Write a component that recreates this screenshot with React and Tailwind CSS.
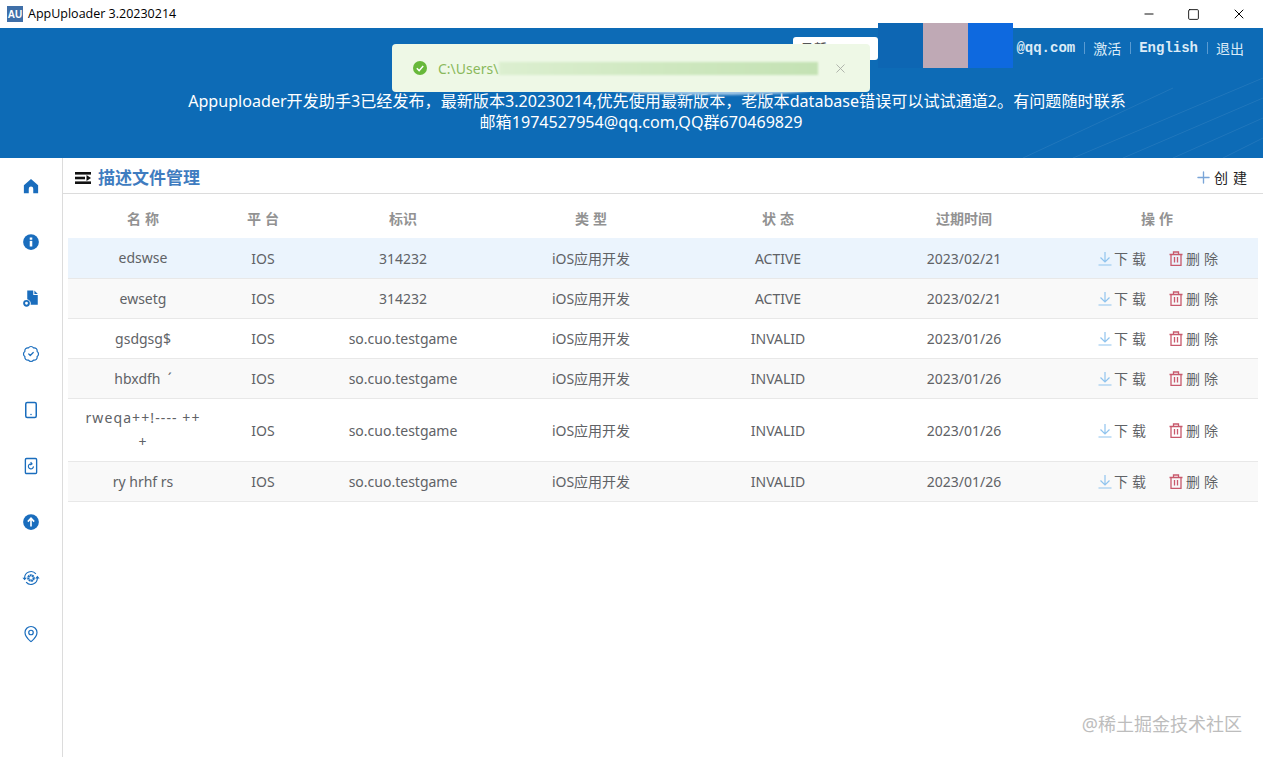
import React from "react";
import { BadgeCheck, Smartphone, MapPin, X, Minus, Square, Plus } from "lucide-react";

const rows = [
  ["edswse", "314232", "ACTIVE", "2023/02/21", "h-10 bg-[#ebf4fd]", ""],
  ["ewsetg", "314232", "ACTIVE", "2023/02/21", "h-10 bg-[#f9f9f9]", ""],
  ["gsdgsg$", "so.cuo.testgame", "INVALID", "2023/01/26", "h-10 bg-white", ""],
  ["hbxdfh  ´", "so.cuo.testgame", "INVALID", "2023/01/26", "h-10 bg-[#f9f9f9]", ""],
  ["rweqa++!---- ++\n+", "so.cuo.testgame", "INVALID", "2023/01/26", "h-[63px] bg-white", "tracking-[1.100px]"],
  ["ry hrhf rs", "so.cuo.testgame", "INVALID", "2023/01/26", "h-10 bg-[#f9f9f9]", ""],
];

const I = ({ children }) => (
  <svg width="18" height="18" viewBox="0 0 24 24" fill="#1a6dbd">{children}</svg>
);

const navIcons = [
  <I key="home"><path d="M12 2.500 2.500 11v10.500h6.500v-6a3 3 0 0 1 6 0v6h6.500V11z" /></I>,
  <I key="info"><circle cx="12" cy="12" r="10.500" /><rect x="10.300" y="10.500" width="3.400" height="7.500" fill="#fff" /><rect x="10.300" y="6" width="3.400" height="3" fill="#fff" /></I>,
  <I key="file">
    <path d="M7 2h8v6h6v13H11.500A6 6 0 0 0 7 13.500z" />
    <path d="M16.500 2 21 6.500h-4.500z" />
    <circle cx="6" cy="19" r="3.200" fill="none" stroke="#1a6dbd" strokeWidth="2.600" />
  </I>,
  <BadgeCheck key="badge" size={18} color="#1a6dbd" strokeWidth={1.6} />,
  <Smartphone key="phone" size={18} color="#1a6dbd" strokeWidth={2} />,
  <svg key="tablet" width="18" height="18" viewBox="0 0 24 24" fill="none" stroke="#1a6dbd" strokeWidth="1.800">
    <rect x="4.500" y="2" width="15" height="20" rx="1.500" />
    <path d="M15.300 12.500a3.400 3.400 0 1 1-2.400-3.300M11.500 6.800l1.900 2.300-2.300 1.700" strokeWidth="1.500" />
  </svg>,
  <I key="up"><circle cx="12" cy="12" r="10.500" /><path d="M12 18V7.500M7.800 11.500 12 7l4.200 4.500" fill="none" stroke="#fff" strokeWidth="2.200" /></I>,
  <svg key="sync" width="20" height="20" viewBox="0 0 24 24" fill="none" stroke="#1a6dbd" strokeWidth="1.500">
    <circle cx="12" cy="12" r="3.600" strokeWidth="3" strokeDasharray="2.400 0.600" />
    <path d="M3.500 12a8.500 8.500 0 0 1 15-5.500M20.500 12a8.500 8.500 0 0 1-15 5.500" />
    <path d="M0.500 11.500h6L3.500 15zM17.500 12.500h6L20.500 9z" fill="#1a6dbd" stroke="none" />
  </svg>,
  <MapPin key="pin" size={18} color="#1a6dbd" strokeWidth={1.6} />,
];

const Sep = () => <span className="mx-[8.500px] h-3 w-px bg-[#5a9bd2]" />;

export default function App() {
  return (
    <div className="relative flex h-[757px] w-[1263px] flex-col overflow-hidden bg-white font-['Noto_Sans','Noto_Sans_CJK_SC',sans-serif] text-[#606266]">
      <div className="flex h-7 shrink-0 items-center bg-white pl-[7px]">
        <div className="flex h-4 w-4 items-center justify-center bg-[#3f6fa8] font-['Liberation_Sans',sans-serif] text-[10px] font-bold text-white">AU</div>
        <span className="ml-[5px] font-['Open_Sans',sans-serif] text-[12.500px] text-black">AppUploader 3.20230214</span>
        <div className="ml-auto flex items-center text-black">
          <span className="flex w-[45px] justify-center"><Minus size={14} strokeWidth={1.6} /></span>
          <span className="flex w-[45px] justify-center"><Square size={13} strokeWidth={1.6} /></span>
          <span className="flex w-[47px] justify-center pr-[1px]"><X size={16} strokeWidth={1.5} /></span>
        </div>
      </div>

      <header className="relative h-[130px] shrink-0 overflow-hidden bg-[#0d6bb6] text-white">
        <svg className="absolute bottom-0 right-0" width="260" height="90" viewBox="0 0 260 90" fill="none" stroke="#ffffff" strokeOpacity="0.08">
          <path d="M20 90 170 20M70 90 260 10M120 90 260 30M170 90 260 50M220 90 260 70" />
        </svg>
        <div className="relative flex h-[38px] items-center justify-end pr-[19px] pt-[2px] text-[14px]">
          <span className="font-['Liberation_Mono',monospace] font-bold text-[#dcebf7]">@qq.com</span>
          <Sep />
          <span className="text-[14px] text-[#dcebf7]">激活</span>
          <Sep />
          <span className="font-['Liberation_Mono',monospace] font-bold text-[#dcebf7]">English</span>
          <Sep />
          <span className="text-[14px] text-[#dcebf7]">退出</span>
        </div>
        <p className="relative ml-[141px] mt-[25px] w-[1000px] text-center text-[16.100px] leading-[21px]">
          <span className="inline-block pl-[32px]">Appuploader开发助手3已经发布，最新版本3.20230214,优先使用最新版本，老版本database错误可以试试通道2。有问题随时联系</span>
          <br />
          邮箱1974527954@qq.com,QQ群670469829
        </p>
      </header>

      <div className="flex min-h-0 flex-1">
        <nav className="flex w-[63px] shrink-0 flex-col items-center gap-[38px] border-r border-[#dcdcdc] pr-[1px] pt-[19px]">
          {navIcons.map((icon, i) => (
            <span key={i} className="flex h-[18px] w-[18px] items-center justify-center">{icon}</span>
          ))}
        </nav>
        <main className="min-w-0 flex-1">
          <div className="flex h-[36px] items-center border-b border-[#dcdcdc] pl-[12px] pr-[11px] pt-[4px]">
            <svg width="16" height="12" viewBox="0 0 16 12" fill="#111">
              <rect width="16" height="2.600" />
              <rect y="4.700" width="10" height="2.600" />
              <path d="M16 6 11.500 3v6z" />
              <rect y="9.400" width="16" height="2.600" />
            </svg>
            <span className="ml-[7px] text-[17px] font-bold text-[#3f7cc0]">描述文件管理</span>
            <div className="ml-auto flex items-center text-[14px] tracking-[5px] text-[#222]">
              <Plus size={19} color="#7aa5d8" strokeWidth={1.7} />
              <span className="ml-[1px]">创建</span>
            </div>
          </div>
          <div className="pl-[5px] pr-[5px]">
            <table className="w-[1190px] table-fixed border-collapse text-center text-[14px]">
              <colgroup>
                <col className="w-[150px]" />
                <col className="w-[90px]" />
                <col className="w-[190px]" />
                <col className="w-[186px]" />
                <col className="w-[188px]" />
                <col className="w-[184px]" />
                <col className="w-[202px]" />
              </colgroup>
              <thead>
                <tr className="h-[44px] text-[14px] text-[#929292]">
                  <th className="pt-[4px] pl-[4px] font-bold tracking-[4px]">名称</th>
                  <th className="pt-[4px] pl-[4px] font-bold tracking-[4px]">平台</th>
                  <th className="pt-[4px] font-bold">标识</th>
                  <th className="pt-[4px] pl-[4px] font-bold tracking-[4px]">类型</th>
                  <th className="pt-[4px] pl-[4px] font-bold tracking-[4px]">状态</th>
                  <th className="pt-[4px] font-bold">过期时间</th>
                  <th className="pt-[4px] pl-[4px] font-bold tracking-[4px]">操作</th>
                </tr>
              </thead>
              <tbody>
                {rows.map((r) => (
                  <tr key={r[0]} className={`border-b border-[#e8e8e8] ${r[4]}`}>
                    <td className={`whitespace-pre-wrap px-[14px] pt-[1px] leading-[24px] ${r[5]}`}>{r[0]}</td>
                    <td className="pt-[1px]">IOS</td>
                    <td className="pt-[1px]">{r[1]}</td>
                    <td className="pt-[1px]">iOS应用开发</td>
                    <td className="pt-[1px]">{r[2]}</td>
                    <td className="pt-[1px]">{r[3]}</td>
                    <td className="pt-[1px]">
                      <div className="flex items-center justify-center pl-[6px] tracking-[4px]">
                        <svg width="14" height="15" viewBox="0 0 14 15" fill="none" stroke="#90c4ee" strokeWidth="1.200">
                          <path d="M7 1v9.500M2.500 6.500 7 11l4.500-4.500M0.500 14h13" />
                        </svg>
                        <span className="ml-[2px]">下载</span>
                        <svg className="ml-[19px]" width="14" height="15" viewBox="0 0 14 15" fill="none" stroke="#c8596c" strokeWidth="1.300">
                          <path d="M0.500 3.500h13M4.500 3.500V1h5v2.500M2 3.500V14.300h10V3.500M5.500 6v5.500M8.500 6v5.500" />
                        </svg>
                        <span className="ml-[3px]">删除</span>
                      </div>
                    </td>
                  </tr>
                ))}
              </tbody>
            </table>
          </div>
        </main>
      </div>

      {/* select partly hidden behind the toast */}
      <div className="absolute left-[793px] top-[37px] h-[23px] w-[85px] rounded-[3px] bg-white pl-2 text-[13px] leading-[23px] text-[#555]">马新</div>
      {/* masked avatar blocks */}
      <div className="absolute left-[878px] top-[23px] flex h-[45px]">
        <span className="w-[45px] bg-[#0d66b3]" />
        <span className="w-[45px] bg-[#bfa9b5]" />
        <span className="w-[45px] bg-[#0e69df]" />
      </div>
      {/* blurred smear below the toast */}
      <div className="absolute left-[610px] top-[84px] h-[11px] w-[205px] rounded-b-[50%] bg-[#9dc4e4] blur-[1px]" />
      {/* toast */}
      <div className="absolute left-[392px] top-[44px] flex h-[48px] w-[478px] items-center rounded-[4px] bg-[#eef8e6] pl-[21px] text-[14px]">
        <svg width="14" height="14" viewBox="0 0 24 24">
          <circle cx="12" cy="12" r="12" fill="#67b83a" />
          <path d="m6.500 12.500 4 4 7-8" fill="none" stroke="#fff" strokeWidth="2.500" />
        </svg>
        <span className="ml-[11px] text-[#8ab85c]">C:\Users\</span>
        <span className="ml-[1px] h-[13px] w-[319px] bg-gradient-to-r from-[#dcefd0] via-[#cfe8c0] to-[#c4e2b4] blur-[1px]" />
        <X className="ml-[15px]" size={15} color="#a8aba5" strokeWidth={1.4} />
      </div>
      <div className="absolute bottom-[19px] right-[21px] text-[18px] text-[#bdbdbd]">@稀土掘金技术社区</div>
    </div>
  );
}
